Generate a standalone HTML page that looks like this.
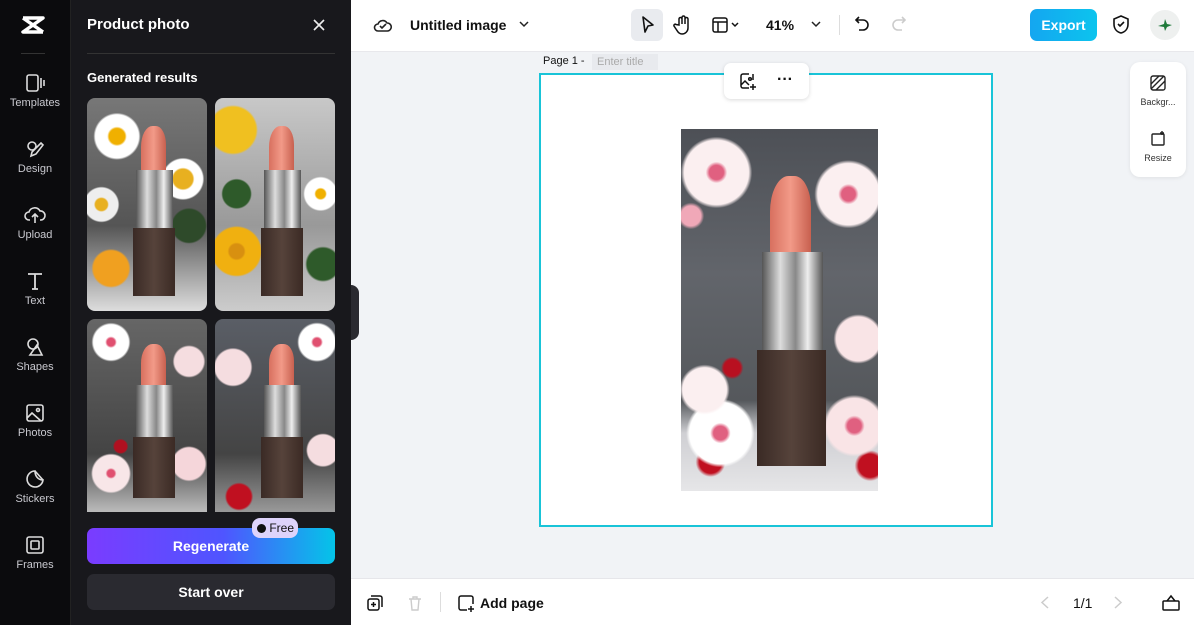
<!DOCTYPE html>
<html><head><meta charset="utf-8"><style>
*{box-sizing:border-box;margin:0;padding:0}
body{width:1194px;height:625px;overflow:hidden;font-family:"Liberation Sans",sans-serif;background:#f1f3f6;position:relative}
.abs{position:absolute}
#side{left:0;top:0;width:71px;height:625px;background:#0b0b0d;border-right:1px solid #222}
.nav{position:absolute;left:0;width:70px;text-align:center;color:#c9c9cf;font-size:11px}
.nav svg{display:block;margin:0 auto 4px}
#panel{left:71px;top:0;width:280px;height:625px;background:#18181c}
.img{position:absolute;border-radius:8px;overflow:hidden}
.ls{position:absolute;width:100%;height:100%;left:0;top:0}
.ls i{position:absolute;display:block}
.b1{left:45%;width:21%;top:13%;height:22%;background:linear-gradient(90deg,#d8705f,#f29a88 50%,#c8604f);border-radius:45% 40% 0 0}
.b2{left:41%;width:31%;top:34%;height:27%;background:linear-gradient(90deg,#555,#ddd 30%,#888 55%,#eee 75%,#555)}
.b3{left:38.5%;width:35%;top:61%;height:32%;background:linear-gradient(90deg,#3a2a25,#56433b 50%,#3b2a24)}
.top{left:351px;top:0;width:843px;height:52px;background:#fff;border-bottom:1px solid #e8e8ec}
.bot{left:351px;top:578px;width:843px;height:47px;background:#fff;border-top:1px solid #e6e6ea}
svg{overflow:visible}
</style></head><body>
<div id="side" class="abs">
 <svg class="abs" style="left:20px;top:15px" width="26" height="20" viewBox="0 0 26 20"><path d="M3 3h20L3 17h20M3 3l20 14" stroke="#fff" stroke-width="3.5" fill="none" stroke-linejoin="round"/></svg>
 <div class="abs" style="left:21px;top:53px;width:24px;height:1px;background:#333"></div>
 <div class="nav" style="top:73px"><svg width="20" height="20" viewBox="0 0 20 20" fill="none" stroke="#ddd" stroke-width="1.6"><rect x="2" y="2" width="11" height="16" rx="2"/><path d="M16 5v10M19 7v6"/></svg>Templates</div>
 <div class="nav" style="top:139px"><svg width="20" height="20" viewBox="0 0 20 20" fill="none" stroke="#ddd" stroke-width="1.6"><circle cx="7" cy="7" r="4"/><path d="M11 9l5-5 2 2-7 9-5 2 1-4z"/></svg>Design</div>
 <div class="nav" style="top:205px"><svg width="22" height="20" viewBox="0 0 22 20" fill="none" stroke="#ddd" stroke-width="1.6"><path d="M6 15H5a4 4 0 010-8 6 6 0 0111-1 4 4 0 011 9h-1M11 9v9M8 12l3-3 3 3"/></svg>Upload</div>
 <div class="nav" style="top:271px"><svg width="20" height="20" viewBox="0 0 20 20" fill="none" stroke="#ddd" stroke-width="1.8"><path d="M3 3h14M10 3v15M7 18h6"/></svg>Text</div>
 <div class="nav" style="top:337px"><svg width="20" height="20" viewBox="0 0 20 20" fill="none" stroke="#ddd" stroke-width="1.6"><circle cx="8" cy="7" r="5"/><path d="M12 8l-7 10h12z"/></svg>Shapes</div>
 <div class="nav" style="top:403px"><svg width="20" height="20" viewBox="0 0 20 20" fill="none" stroke="#ddd" stroke-width="1.6"><rect x="2" y="2" width="16" height="16" rx="2"/><circle cx="13" cy="7" r="1.5"/><path d="M2 15l5-5 9 8"/></svg>Photos</div>
 <div class="nav" style="top:469px"><svg width="20" height="20" viewBox="0 0 20 20" fill="none" stroke="#ddd" stroke-width="1.6"><path d="M18 11A8 8 0 1110 2c0 5 3 9 8 9zM10 2l8 9"/></svg>Stickers</div>
 <div class="nav" style="top:535px"><svg width="20" height="20" viewBox="0 0 20 20" fill="none" stroke="#ddd" stroke-width="1.6"><rect x="2" y="2" width="16" height="16" rx="2"/><rect x="6" y="6" width="8" height="8" rx="1"/></svg>Frames</div>
</div>
<div id="panel" class="abs">
 <div class="abs" style="left:16px;top:16px;color:#fff;font-weight:bold;font-size:15px">Product photo</div>
 <svg class="abs" style="left:242px;top:19px" width="12" height="12"><path d="M1 1l10 10M11 1L1 11" stroke="#eee" stroke-width="1.6"/></svg>
 <div class="abs" style="left:16px;top:53px;width:248px;height:1px;background:#333"></div>
 <div class="abs" style="left:16px;top:70px;color:#fff;font-weight:bold;font-size:13px">Generated results</div>
 <div class="img" style="left:16px;top:98px;width:120px;height:213px;background:radial-gradient(circle at 25% 18%,#f0b000 0 4%,#fff 5% 11%,transparent 12%),radial-gradient(circle at 80% 38%,#e8b020 0 6%,#fff 7% 12%,transparent 13%),radial-gradient(circle at 20% 80%,#f0a020 0 9%,transparent 10%),radial-gradient(circle at 12% 50%,#e8b020 0 4%,#eee 5% 11%,transparent 12%),radial-gradient(circle at 85% 60%,#2e4a2a 0 10%,transparent 11%),linear-gradient(#777,#555 60%,#ddd)"><div class="ls"><i class="b1"></i><i class="b2"></i><i class="b3"></i></div></div>
 <div class="img" style="left:144px;top:98px;width:120px;height:213px;background:radial-gradient(circle at 15% 15%,#f0c020 0 11%,transparent 12%),radial-gradient(circle at 18% 72%,#d89010 0 4%,#f0b010 5% 13%,transparent 14%),radial-gradient(circle at 88% 45%,#f0b000 0 3%,#fff 4% 10%,transparent 11%),radial-gradient(circle at 18% 45%,#2e5a2a 0 9%,transparent 10%),radial-gradient(circle at 90% 78%,#2e5a2a 0 8%,transparent 9%),linear-gradient(#c8c8c8,#999 60%,#ccc)"><div class="ls"><i class="b1"></i><i class="b2"></i><i class="b3"></i></div></div>
 <div class="img" style="left:16px;top:319px;width:120px;height:193px;border-radius:8px 8px 0 0;background:radial-gradient(circle at 20% 12%,#e05070 0 2%,#fff 3% 9%,transparent 10%),radial-gradient(circle at 85% 22%,#f5dde0 0 8%,transparent 9%),radial-gradient(circle at 20% 80%,#e05070 0 2%,#f8e6e8 3% 10%,transparent 11%),radial-gradient(circle at 85% 75%,#f5d6da 0 9%,transparent 10%),radial-gradient(circle at 28% 66%,#b01020 0 4%,transparent 5%),linear-gradient(#666,#444 70%,#bbb)"><div class="ls"><i class="b1"></i><i class="b2"></i><i class="b3"></i></div></div>
 <div class="img" style="left:144px;top:319px;width:120px;height:193px;border-radius:8px 8px 0 0;background:radial-gradient(circle at 15% 25%,#f5dde0 0 10%,transparent 11%),radial-gradient(circle at 85% 12%,#e05070 0 2%,#fff 3% 9%,transparent 10%),radial-gradient(circle at 90% 68%,#f5dde0 0 9%,transparent 10%),radial-gradient(circle at 20% 92%,#c01020 0 6%,transparent 7%),linear-gradient(#5a5e66,#444 70%,#999)"><div class="ls"><i class="b1"></i><i class="b2"></i><i class="b3"></i></div></div>
 <div class="abs" style="left:16px;top:528px;width:248px;height:36px;border-radius:7px;background:linear-gradient(90deg,#7a3cff,#4f55ff 55%,#04c4e8);color:#fff;font-size:14px;font-weight:bold;text-align:center;line-height:36px">Regenerate</div>
 <div class="abs" style="left:181px;top:518px;width:46px;height:20px;border-radius:8px;background:#ddd3fb;font-size:12px;line-height:20px;color:#111;padding-left:5px"><span style="display:inline-block;width:9px;height:9px;border-radius:50%;background:#111;vertical-align:-1px"></span> Free</div>
 <div class="abs" style="left:16px;top:574px;width:248px;height:36px;border-radius:7px;background:#2a2a30;color:#fff;font-size:14px;font-weight:bold;text-align:center;line-height:36px">Start over</div>
</div>
<div class="abs" style="left:351px;top:285px;width:8px;height:55px;background:#2a2a30;border-radius:0 8px 8px 0"></div>
<div class="abs top">
 <svg class="abs" style="left:23px;top:17px" width="18" height="16" viewBox="0 0 18 16" fill="none" stroke="#222" stroke-width="1.6"><path d="M5 14H4a3.5 3.5 0 010-7 5 5 0 019-1 4 4 0 01.5 8H5zM6 9l2 2 4-4"/></svg>
 <div class="abs" style="left:59px;top:17px;font-size:14px;font-weight:bold;color:#111">Untitled image</div>
 <svg class="abs" style="left:168px;top:21px" width="10" height="6"><path d="M1 1l4 4 4-4" stroke="#222" stroke-width="1.5" fill="none"/></svg>
 <div class="abs" style="left:280px;top:9px;width:32px;height:32px;border-radius:6px;background:#e9ebef"></div>
 <svg class="abs" style="left:290px;top:16px" width="14" height="18"><path d="M2 1l10 8-5 1-3 6z" stroke="#111" stroke-width="1.6" fill="none" stroke-linejoin="round"/></svg>
 <svg class="abs" style="left:323px;top:15px" width="18" height="20" viewBox="0 0 18 20" fill="none" stroke="#111" stroke-width="1.5"><path d="M5 10V4a1.5 1.5 0 013 0v5V2.5a1.5 1.5 0 013 0V9V4a1.5 1.5 0 013 0v9a6 6 0 01-6 6c-3 0-4-2-6-5l-2-3a1.3 1.3 0 012-1.5z"/></svg>
 <svg class="abs" style="left:361px;top:17px" width="28" height="16" fill="none" stroke="#111" stroke-width="1.5"><rect x="1" y="1" width="14" height="14" rx="2"/><path d="M1 5h14M6 5v10M20 6l3 3 3-3"/></svg>
 <div class="abs" style="left:415px;top:17px;font-size:14px;font-weight:bold;color:#111">41%</div>
 <svg class="abs" style="left:460px;top:21px" width="10" height="6"><path d="M1 1l4 4 4-4" stroke="#222" stroke-width="1.5" fill="none"/></svg>
 <div class="abs" style="left:488px;top:15px;width:1px;height:20px;background:#ddd"></div>
 <svg class="abs" style="left:504px;top:16px" width="14" height="18" fill="none" stroke="#111" stroke-width="1.6"><path d="M4 1L1 4l3 3M1 4h7a5 5 0 010 10H4"/></svg>
 <svg class="abs" style="left:541px;top:16px" width="14" height="18" fill="none" stroke="#ccc" stroke-width="1.6"><path d="M10 1l3 3-3 3M13 4H6a5 5 0 000 10h4"/></svg>
 <div class="abs" style="left:679px;top:9px;width:67px;height:32px;border-radius:7px;background:linear-gradient(90deg,#14a6f0,#0cc4ee);color:#fff;font-size:14px;font-weight:bold;text-align:center;line-height:32px">Export</div>
 <svg class="abs" style="left:762px;top:15px" width="16" height="19" fill="none" stroke="#111" stroke-width="1.6"><path d="M8 1l7 3v5c0 5-3 8-7 9-4-1-7-4-7-9V4zM5 9l2 2 4-4"/></svg>
 <div class="abs" style="left:799px;top:10px;width:30px;height:30px;border-radius:50%;background:#eef0ef"></div>
 <svg class="abs" style="left:807px;top:19px" width="14" height="12"><path d="M7 0l2 5 5 1-5 2-2 4-1-4-6-1 6-2z" fill="#1f7a3a"/></svg>
</div>
<div class="abs" style="left:543px;top:55px;font-size:11px;color:#111">Page 1 -</div>
<div class="abs" style="left:592px;top:54px;width:66px;height:16px;background:#e8eaee;font-size:11px;color:#aaa;padding-left:5px;line-height:16px">Enter title</div>
<div class="abs" style="left:539px;top:73px;width:454px;height:454px;background:#fff;border:2px solid #19c4d8"></div>
<div class="abs" style="left:724px;top:63px;width:85px;height:36px;background:#fff;border-radius:7px;box-shadow:0 1px 4px rgba(0,0,0,.15)">
 <svg class="abs" style="left:16px;top:10px" width="18" height="18" fill="none" stroke="#111" stroke-width="1.5"><path d="M9 1H3a2 2 0 00-2 2v10a2 2 0 002 2h6M1 12l4-4 4 4"/><circle cx="10" cy="6" r="1.3"/><path d="M13 11v6M10 14h6M13 1v6"/></svg>
 <div class="abs" style="left:53px;top:8px;font-size:16px;font-weight:bold;color:#111">···</div>
</div>
<div class="img" style="left:681px;top:129px;width:197px;height:362px;border-radius:0;background:radial-gradient(circle at 18% 12%,#e06080 0 2%,#fbeff0 3% 9%,transparent 10%),radial-gradient(circle at 85% 18%,#e06080 0 2%,#fbeff0 3% 9%,transparent 10%),radial-gradient(circle at 5% 24%,#f0a8b8 0 3%,transparent 4%),radial-gradient(circle at 12% 72%,#fbeff0 0 7%,transparent 8%),radial-gradient(circle at 20% 84%,#e06080 0 2%,#fff 3% 9%,transparent 10%),radial-gradient(circle at 90% 58%,#f9e4e6 0 8%,transparent 9%),radial-gradient(circle at 88% 82%,#e06080 0 2%,#f9e4e6 3% 8%,transparent 9%),radial-gradient(circle at 26% 66%,#b81020 0 3%,transparent 4%),radial-gradient(circle at 96% 93%,#c01020 0 3%,transparent 4%),radial-gradient(circle at 15% 92%,#c01020 0 3%,transparent 4%),linear-gradient(#4d5056,#62656b 40%,#55585c 75%,#cfcfd3 84%,#e6e6e8)"><div class="ls"><i class="b1"></i><i class="b2"></i><i class="b3"></i></div></div>
<div class="abs" style="left:1130px;top:62px;width:56px;height:115px;background:#fff;border-radius:10px;box-shadow:0 1px 4px rgba(0,0,0,.08)">
 <svg class="abs" style="left:20px;top:13px" width="16" height="16" fill="none" stroke="#222" stroke-width="1.4"><rect x="1" y="1" width="14" height="14" rx="2"/><path d="M1 9l8-8M6 15l9-9M1 14L14 1"/></svg>
 <div class="abs" style="left:0;top:35px;width:56px;text-align:center;font-size:9px;color:#333">Backgr...</div>
 <svg class="abs" style="left:20px;top:69px" width="16" height="16" fill="none" stroke="#222" stroke-width="1.4"><rect x="2" y="3" width="12" height="11" rx="1"/><path d="M12 0v4M14 2h-4"/></svg>
 <div class="abs" style="left:0;top:91px;width:56px;text-align:center;font-size:9px;color:#333">Resize</div>
</div>
<div class="abs bot">
 <svg class="abs" style="left:16px;top:16px" width="16" height="16" fill="none" stroke="#111" stroke-width="1.5"><rect x="1" y="4" width="11" height="11" rx="2"/><path d="M4 1h9a2 2 0 012 2v9M6.5 7v5M4 9.5h5"/></svg>
 <svg class="abs" style="left:57px;top:17px" width="14" height="15" fill="none" stroke="#ccc" stroke-width="1.4"><path d="M1 3h12M5 3V1h4v2M3 3l1 11h6l1-11"/></svg>
 <div class="abs" style="left:89px;top:13px;width:1px;height:20px;background:#ddd"></div>
 <svg class="abs" style="left:107px;top:16px" width="17" height="17" fill="none" stroke="#111" stroke-width="1.5"><path d="M9 15H3a2 2 0 01-2-2V3a2 2 0 012-2h10a2 2 0 012 2v6M13 11v6M10 14h6"/></svg>
 <div class="abs" style="left:129px;top:16px;font-size:14px;font-weight:bold;color:#111">Add page</div>
 <svg class="abs" style="left:690px;top:17px" width="8" height="13"><path d="M7 1L1 6.5 7 12" stroke="#ccc" stroke-width="1.5" fill="none"/></svg>
 <div class="abs" style="left:722px;top:16px;font-size:14px;color:#111">1/1</div>
 <svg class="abs" style="left:763px;top:17px" width="8" height="13"><path d="M1 1l6 5.5L1 12" stroke="#ccc" stroke-width="1.5" fill="none"/></svg>
 <svg class="abs" style="left:811px;top:16px" width="18" height="16" fill="none" stroke="#111" stroke-width="1.5"><rect x="1" y="6" width="16" height="9" rx="1"/><path d="M5 6l4-5 4 5"/></svg>
</div>
</body></html>
